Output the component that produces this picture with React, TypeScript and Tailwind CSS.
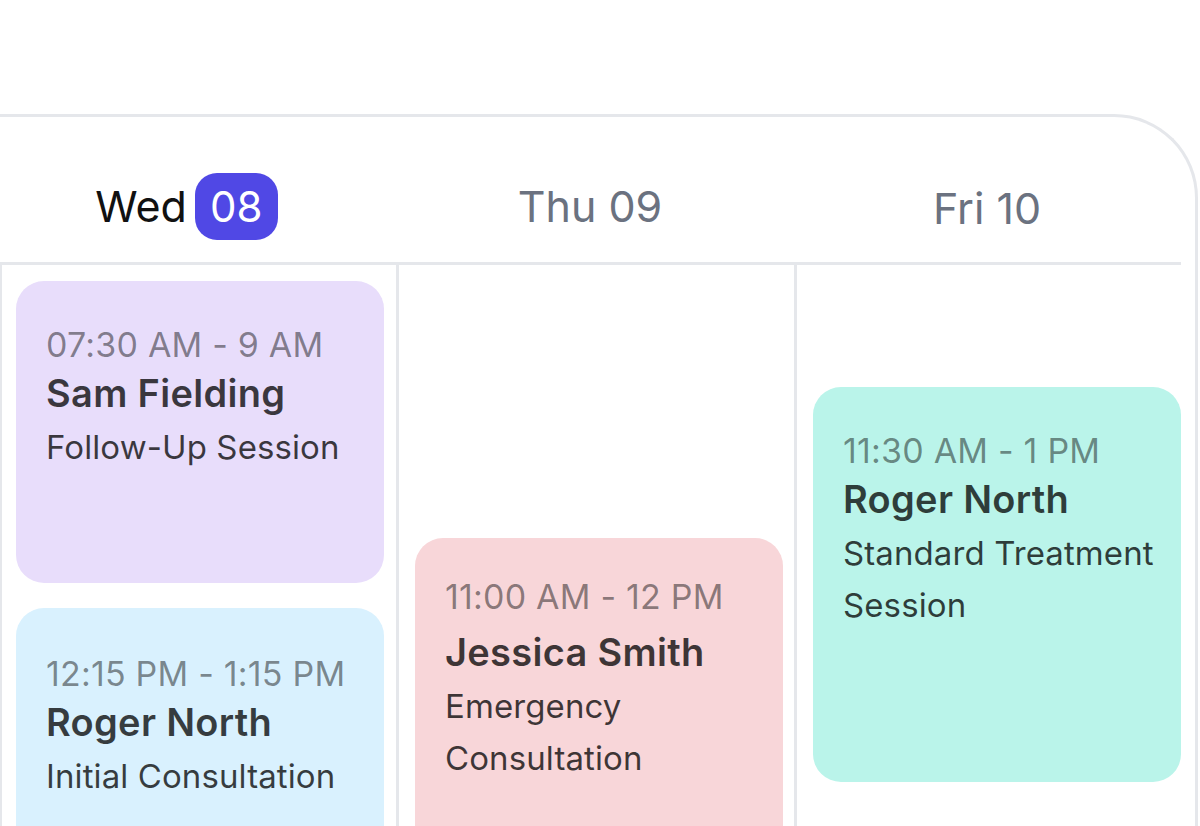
import React from 'react';

type Appt = {
  time: string;
  name: string;
  lines: string[];
  bg: string;
  top: string;
  height: string;
  pad: string;
  nameGap?: string;
};

const AppointmentCard: React.FC<{ appt: Appt }> = ({ appt }) => (
  <div className={`w-[368px] shrink-0 rounded-[28px] pl-[30px] pr-3 ${appt.bg} ${appt.top} ${appt.height} ${appt.pad}`}>
    <p className="text-[34px] leading-[40px] text-black/45 tracking-[0.2px] whitespace-nowrap">{appt.time}</p>
    <p className={`text-[38px] leading-[56px] font-semibold text-black/75 tracking-[0.3px] whitespace-nowrap ${appt.nameGap ?? ''}`}>{appt.name}</p>
    {appt.lines.map((l) => (
      <p key={l} className="text-[33px] leading-[52px] text-black/75 tracking-[0.1px] whitespace-nowrap">
        {l}
      </p>
    ))}
  </div>
);

const App: React.FC = () => {
  const wed: Appt[] = [
    {
      time: '07:30 AM - 9 AM',
      name: 'Sam Fielding',
      lines: ['Follow-Up Session'],
      bg: 'bg-[#e8ddfb]',
      top: 'mt-4',
      height: 'h-[302px]',
      pad: 'pt-[44px]',
    },
    {
      time: '12:15 PM - 1:15 PM',
      name: 'Roger North',
      lines: ['Initial Consultation'],
      bg: 'bg-[#d9f1fe]',
      top: 'mt-[25px]',
      height: 'h-[300px]',
      pad: 'pt-[46px]',
    },
  ];

  const thu: Appt = {
    time: '11:00 AM - 12 PM',
    name: 'Jessica Smith',
    lines: ['Emergency', 'Consultation'],
    bg: 'bg-[#f8d6d9]',
    top: 'mt-[273px]',
    height: 'h-[400px]',
    pad: 'pt-[39px]',
    nameGap: 'mt-[7px]',
  };

  const fri: Appt = {
    time: '11:30 AM - 1 PM',
    name: 'Roger North',
    lines: ['Standard Treatment', 'Session'],
    bg: 'bg-[#baf4ea]',
    top: 'mt-[122px]',
    height: 'h-[395px]',
    pad: 'pt-[44px]',
  };

  return (
    <div className="w-[1200px] h-[826px] overflow-hidden bg-white pt-[114px] font-['Inter',sans-serif]">
      {/* calendar card */}
      <div className="w-[1198px] h-[760px] border-t-[3px] border-r-[3px] border-[#e5e7eb] rounded-tr-[84px] pr-[14px]">
        {/* day header */}
        <div className="grid grid-cols-[399px_398px_1fr] h-[148px] border-b-[3px] border-[#e5e7eb]">
          <div className="flex items-center justify-center pt-[34px] pr-[26px]">
            <span className="text-[43px] leading-none text-[#111111]">Wed</span>
            <span className="ml-2 w-[83px] h-[67px] rounded-[22px] bg-[#5048e5] text-white text-[42px] leading-none flex items-center justify-center">
              08
            </span>
          </div>
          <div className="flex items-center justify-center pt-[34px] pr-[16px]">
            <span className="text-[43px] leading-none text-[#6b7280]">Thu 09</span>
          </div>
          <div className="flex items-center justify-center pt-[38px] pr-[4px]">
            <span className="text-[43px] leading-none text-[#6b7280]">Fri 10</span>
          </div>
        </div>

        {/* columns */}
        <div className="grid grid-cols-[399px_398px_1fr] h-[620px]">
          <div className="flex flex-col border-l-[3px] border-r-[3px] border-[#e5e7eb] pl-[14px] -ml-[1px]">
            {wed.map((a) => (
              <AppointmentCard key={a.time} appt={a} />
            ))}
          </div>
          <div className="flex flex-col border-r-[3px] border-[#e5e7eb] pl-4">
            <AppointmentCard appt={thu} />
          </div>
          <div className="flex flex-col pl-4">
            <AppointmentCard appt={fri} />
          </div>
        </div>
      </div>
    </div>
  );
};

export default App;
